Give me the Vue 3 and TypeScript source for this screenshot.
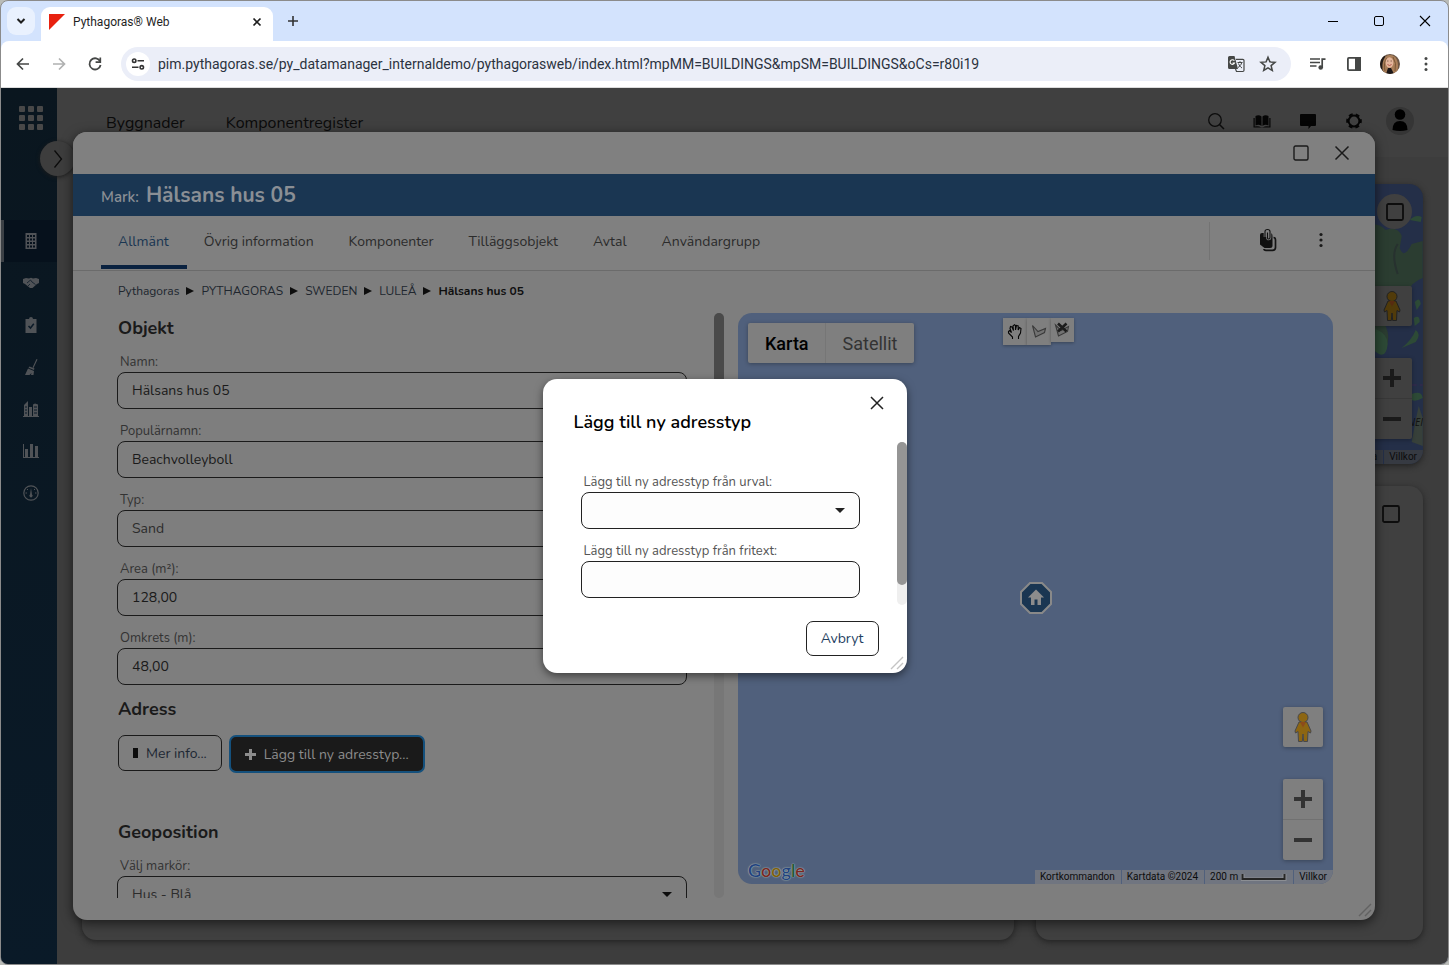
<script setup lang="ts">
import { ref } from 'vue'

interface Field {
  id: string
  label: string
  value: string
  kind: 'text' | 'select'
}

const address = ref('pim.pythagoras.se/py_datamanager_internaldemo/pythagorasweb/index.html?mpMM=BUILDINGS&mpSM=BUILDINGS&oCs=r80i19')
const tabs = ['Allmänt', 'Övrig information', 'Komponenter', 'Tilläggsobjekt', 'Avtal', 'Användargrupp']
const activeTab = ref('Allmänt')
const crumbs = ['Pythagoras', 'PYTHAGORAS', 'SWEDEN', 'LULEÅ']
const fields = ref<Field[]>([
  { id: 'namn', label: 'Namn:', value: 'Hälsans hus 05', kind: 'text' },
  { id: 'popnamn', label: 'Populärnamn:', value: 'Beachvolleyboll', kind: 'text' },
  { id: 'typ', label: 'Typ:', value: 'Sand', kind: 'select' },
  { id: 'area', label: 'Area (m²):', value: '128,00', kind: 'text' },
  { id: 'omkrets', label: 'Omkrets (m):', value: '48,00', kind: 'text' },
])
const sideItems = ['building', 'handshake', 'clipboard', 'broom', 'city', 'chart', 'gauge']
const googleLetters = [
  { c: 'G', k: 'b' }, { c: 'o', k: 'r' }, { c: 'o', k: 'y' },
  { c: 'g', k: 'b' }, { c: 'l', k: 'g' }, { c: 'e', k: 'r' },
]
const choice = ref('')
const freeText = ref('')
</script>

<template>
  <div class="window">
    <header class="tabstrip">
      <button class="tab-search" aria-label="Sök bland flikar">
        <svg width="12" height="12" viewBox="0 0 12 12"><path d="M2.5 4 6 7.5 9.500 4" fill="none" stroke="#1f1f1f" stroke-width="2" /></svg>
      </button>
      <div class="browser-tab">
        <svg width="16" height="16" viewBox="0 0 16 16"><path d="M0 0H16L0 16Z" fill="#e8210f" /></svg>
        <span class="tab-title">Pythagoras® Web</span>
        <button class="plain" aria-label="Stäng flik">
          <svg width="10" height="10" viewBox="0 0 10 10"><path d="M1.500 1.500 8.500 8.500M8.500 1.500 1.500 8.500" stroke="#1f1f1f" stroke-width="1.700" /></svg>
        </button>
      </div>
      <button class="plain new-tab" aria-label="Ny flik">
        <svg width="12" height="12" viewBox="0 0 12 12"><path d="M6 1V11M1 6H11" stroke="#333" stroke-width="1.600" /></svg>
      </button>
      <div class="win-controls">
        <button class="plain" aria-label="Minimera"><svg width="12" height="12" viewBox="0 0 12 12"><path d="M1 6.500H11" stroke="#000" /></svg></button>
        <button class="plain" aria-label="Maximera"><svg width="12" height="12" viewBox="0 0 12 12"><rect x="1.500" y="1.500" width="9" height="9" rx="1.500" fill="none" stroke="#000" /></svg></button>
        <button class="plain" aria-label="Stäng"><svg width="12" height="12" viewBox="0 0 12 12"><path d="M1 1 11 11M11 1 1 11" stroke="#000" stroke-width="1.100" /></svg></button>
      </div>
    </header>

    <div class="toolbar">
      <button class="plain nav" aria-label="Bakåt"><svg width="16" height="16" viewBox="0 0 16 16"><path d="M14 8H3M8 2.500 2.500 8 8 13.500" fill="none" stroke="#454746" stroke-width="1.700" /></svg></button>
      <button class="plain nav" aria-label="Framåt"><svg width="16" height="16" viewBox="0 0 16 16"><path d="M2 8H13M8 2.500 13.500 8 8 13.500" fill="none" stroke="#b0b1b1" stroke-width="1.700" /></svg></button>
      <button class="plain nav" aria-label="Läs in igen"><svg width="16" height="16" viewBox="0 0 16 16"><path d="M13.200 5.500A5.600 5.600 0 1 0 13.600 9" fill="none" stroke="#454746" stroke-width="1.800" /><path d="M13.300 1.500V6.200H8.600" fill="none" stroke="#454746" stroke-width="1.700" /></svg></button>
      <div class="omnibox">
        <button class="plain site-info" aria-label="Webbplatsinformation">
          <svg width="14" height="14" viewBox="0 0 14 14" fill="none" stroke="#333" stroke-width="1.600"><circle cx="3.200" cy="3.700" r="1.700" /><path d="M6.500 3.700H13M1 10.300H7.500" /><circle cx="10.800" cy="10.300" r="1.700" /></svg>
        </button>
        <input v-model="address" class="address" aria-label="Adress" type="text">
        <button class="plain" aria-label="Översätt">
          <svg width="18" height="18" viewBox="0 0 18 18"><path d="M2.500 1H7.500L11 14H2.500A1.500 1.500 0 0 1 1 12.500V2.500A1.500 1.500 0 0 1 2.500 1Z" fill="#454746" /><path d="M9 4.300H15.800A1.200 1.200 0 0 1 17 5.500V15.300A1.200 1.200 0 0 1 15.800 16.500H9.500L8.500 14" fill="none" stroke="#454746" stroke-width="1.200" /><path d="M7.300 5.700A2.300 2.300 0 1 0 7.500 8H5.600" fill="none" stroke="#fff" stroke-width="1.100" /><path d="M10.500 7.500H15.500M13 6.200V7.500M14.800 7.500C14.200 10 12.500 11.500 11 12.500M11.500 8.500C12.200 10.500 13.500 12 15 13" fill="none" stroke="#454746" stroke-width="1" /></svg>
        </button>
        <button class="plain" aria-label="Lägg till bokmärke">
          <svg width="18" height="18" viewBox="0 0 18 18"><path d="M9 2.200 10.900 6.900 16 7.300 12.100 10.600 13.300 15.500 9 12.800 4.700 15.500 5.900 10.600 2 7.300 7.100 6.900Z" fill="none" stroke="#454746" stroke-width="1.500" /></svg>
        </button>
      </div>
      <div class="tools">
        <button class="plain" aria-label="Media"><svg width="16" height="16" viewBox="0 0 16 16"><path d="M0 3H10M0 6.500H10M0 10H6.500" stroke="#454746" stroke-width="1.600" /><path d="M12.200 12V3.200H15.500" fill="none" stroke="#454746" stroke-width="1.700" /><circle cx="10.700" cy="11.500" r="2.300" fill="#454746" /></svg></button>
        <button class="plain" aria-label="Sidopanel"><svg width="16" height="16" viewBox="0 0 16 16"><rect x="1.900" y="1.900" width="12.200" height="12.200" rx="1" fill="none" stroke="#454746" stroke-width="1.800" /><path d="M9 1H15V15H9Z" fill="#454746" /></svg></button>
        <button class="plain" aria-label="Profil">
          <svg width="20" height="20" viewBox="0 0 20 20"><defs><clipPath id="face"><circle cx="10" cy="10" r="10" /></clipPath></defs><g clip-path="url(#face)"><path d="M0 0H20V20H0Z" fill="#6b5544" /><path d="M0 0H5V20H0Z" fill="#211b18" /><path d="M3 19C1 8 4 1 10 1S20 7 17 20Z" fill="#a97e58" /><path d="M5 17Q3 9 7 4M15 17Q17 9 13 3" fill="none" stroke="#7a5637" /><ellipse cx="9.500" cy="8.500" rx="3.900" ry="5.200" fill="#e3b59b" /><path d="M7.500 10.500Q9.500 12.500 11.500 10.500" fill="none" stroke="#b0554b" /><path d="M7 7H8.500M10.500 7H12" stroke="#8a6653" /><path d="M6 20 8 14H11L14 20Z" fill="#1b1718" /></g></svg>
        </button>
        <button class="plain" aria-label="Meny"><svg width="16" height="16" viewBox="0 0 16 16" fill="#454746"><circle cx="8" cy="2.500" r="1.500" /><circle cx="8" cy="8" r="1.500" /><circle cx="8" cy="13.500" r="1.500" /></svg></button>
      </div>
    </div>

    <div class="app">
      <nav class="sidebar" aria-label="Huvudmeny">
        <button class="plain apps" aria-label="Appar">
          <svg width="24" height="24" viewBox="0 0 24 24" fill="#484848"><g v-for="r in 3" :key="r"><rect v-for="c in 3" :key="c" :x="(c - 1) * 9" :y="(r - 1) * 9" width="6" height="6" rx="1" /></g></svg>
        </button>
        <button v-for="item in sideItems" :key="item" class="plain side-item" :class="{ active: item === 'building' }" :aria-label="item">
          <svg width="16" height="16" viewBox="0 0 16 16" fill="#505357" stroke="none">
            <template v-if="item === 'building'"><path d="M2.500 0H13.500V16H2.500Z" /><path d="M4 2H6V4H4ZM7 2H9V4H7ZM10 2H12V4H10ZM4 5.500H6V7.500H4ZM7 5.500H9V7.500H7ZM10 5.500H12V7.500H10ZM4 9H6V11H4ZM7 9H9V11H7ZM10 9H12V11H10ZM4 12.500H6V14.500H4ZM7 12.500H9V14.500H7ZM10 12.500H12V14.500H10Z" fill="#06111c" /></template>
            <template v-else-if="item === 'handshake'"><path d="M0 4 3 3 6 3.500 8 2.800 10 3.500 13 3 16 4V8L14 9 9.500 13H7L2 9 0 8Z" /><path d="M4 8 7.500 5 9 7 12.500 9.500M5 11 7 9" fill="none" stroke="#0b1a28" stroke-width="0.800" /></template>
            <template v-else-if="item === 'clipboard'"><path d="M3 2H6A2 2 0 0 1 10 2H13.500V16H2.500V2Z" /><path d="M5.500 9 7.500 11 10.800 6.800" fill="none" stroke="#0b1a28" stroke-width="1.500" /></template>
            <template v-else-if="item === 'broom'"><path d="M13.500 0 14.500 .500 10.500 9 9.500 8.500Z" /><path d="M6.500 7.500 11.500 9.500 11 11 5.500 8.800ZM5 9.500 11 12 10.500 16H8L8.500 14 6.500 16H2Z" /></template>
            <template v-else-if="item === 'city'"><path d="M1 4 5 0V15H6V6H9V15H10V3.500L12 2.500 15 3.500V15H16V16H0V15H1Z" /><path d="M2 6H4M2 9H4M2 12H4M11 6H14M11 9H14M11 12H14" stroke="#0b1a28" stroke-width="1" /></template>
            <template v-else-if="item === 'chart'"><path d="M0 1H1V14H16V15H0ZM2 6H5V14H2ZM7 1H10V14H7ZM12 3H15V14H12Z" /></template>
            <template v-else><circle cx="8" cy="8" r="7.200" fill="none" stroke="#505357" stroke-width="1.200" /><path d="M8 3 9 9.500A1.600 1.600 0 1 1 7 9.500Z" /><path d="M2.500 8H4M12 8H13.500M4 4 5 5M12 4 11 5" stroke="#505357" /></template>
          </svg>
        </button>
      </nav>

      <div class="main">
        <header class="app-header">
          <a href="#" class="app-link">Byggnader</a>
          <a href="#" class="app-link">Komponentregister</a>
          <div class="app-icons">
            <button class="plain" aria-label="Sök"><svg width="18" height="18" viewBox="0 0 18 18"><circle cx="8" cy="8" r="6.300" fill="none" stroke="#0c0c0c" stroke-width="1.300" /><path d="M12.500 12.500 17 17" stroke="#0c0c0c" stroke-width="1.500" /></svg></button>
            <button class="plain" aria-label="Handbok"><svg width="18" height="18" viewBox="0 0 18 18" fill="#050505"><path d="M2.500 4Q6 2.500 8.500 4.500V14Q6 12 2.500 13.500ZM9.500 4.500Q12 2.500 15.500 4V13.500Q12 12 9.500 14Z" /><path d="M.500 6H1.700V14.500Q5 13.500 8 15.200H10Q13 13.500 16.300 14.500V6H17.500V15.500H.500Z" /></svg></button>
            <button class="plain" aria-label="Meddelanden"><svg width="18" height="18" viewBox="0 0 18 18"><path d="M2 2H16A1 1 0 0 1 17 3V13A1 1 0 0 1 16 14H12L9.500 17V14H2A1 1 0 0 1 1 13V3A1 1 0 0 1 2 2Z" fill="#050505" /></svg></button>
            <button class="plain" aria-label="Inställningar"><svg width="18" height="18" viewBox="0 0 18 18"><circle cx="9" cy="9" r="5.400" fill="none" stroke="#050505" stroke-width="2" /><circle cx="9" cy="9" r="6.800" fill="none" stroke="#050505" stroke-width="2" stroke-dasharray="4 3.120" stroke-dashoffset="2" /></svg></button>
            <button class="plain" aria-label="Användare"><svg width="28" height="28" viewBox="0 0 28 28"><circle cx="14" cy="14" r="14" fill="#353535" /><circle cx="14" cy="7.500" r="5.300" /><path d="M6.500 23Q6.500 14 14 14T21.500 23Q14 25 6.500 23Z" /></svg></button>
          </div>
        </header>
        <div class="cards">
          <section class="card tall" />
          <section class="card map-card">
            <svg class="land" viewBox="0 0 387 280" preserveAspectRatio="xMaxYMid slice">
              <path d="M0 40H335Q345 40 350 46Q362 42 366 52L364 64Q368 76 376 60L387 57V94Q376 98 372 108L362 106Q354 112 358 124Q352 134 350 142Q356 156 348 166Q340 170 336 160L330 145H0Z" fill="#2b3d31" />
              <path d="M340 145Q352 150 352 160Q350 178 338 166ZM374 36Q380 30 386 33L385 38ZM379 118Q384 112 385 120L381 126ZM378 134Q384 130 384 138L379 142ZM380 146Q386 150 380 158L366 164Q376 156 380 146ZM376 210Q386 206 387 214Q380 218 376 216Z" fill="#2d4a36" />
              <path d="M380 236 383 222 387 234V262L376 258Z" fill="#37403a" />
              <path d="M362 60Q355 70 362 90" fill="none" stroke="#27312f" stroke-width="2" />
              <path d="M376 201H387" stroke="#2e2b4b" stroke-width="2" stroke-dasharray="5 3" />
            </svg>
            <span class="land-label">NEI</span>
            <button class="round" aria-label="Förstora karta"><svg width="18" height="18" viewBox="0 0 18 18"><rect x="1" y="1" width="16" height="16" rx="1.500" fill="none" stroke="#0d0d0d" stroke-width="1.800" /></svg></button>
            <div class="map-buttons">
              <button class="plain peg" aria-label="Street View"><svg width="20" height="32" viewBox="0 0 20 32"><path d="M6 11 2 20 2.500 22 5 20.500 5.500 30.500H9.300L10 23 10.700 30.500H14.500L15 20.500 17.500 22 18 20 14 11Z" fill="#513b0a" stroke="#222" /><circle cx="10" cy="6.500" r="5" fill="#513b0a" stroke="#222" /><path d="M7 11H13L10 16.500Z" fill="#572b11" /></svg></button>
              <div class="zoom"><button class="plain" aria-label="Zooma in"><svg width="18" height="18" viewBox="0 0 18 18"><path d="M9 0V18M0 9H18" stroke="#1a1a1a" stroke-width="4" /></svg></button><button class="plain" aria-label="Zooma ut"><svg width="18" height="18" viewBox="0 0 18 18"><path d="M0 9H18" stroke="#1a1a1a" stroke-width="4" /></svg></button></div>
            </div>
            <div class="map-terms"><span>Kartdata</span><a href="#">Villkor</a></div>
          </section>
          <section class="card">
            <button class="plain enlarge" aria-label="Förstora"><svg width="18" height="18" viewBox="0 0 18 18"><rect x="1" y="1" width="16" height="16" rx="1.500" fill="none" stroke="#0d0d0d" stroke-width="1.800" /></svg></button>
          </section>
        </div>
      </div>

      <button class="expand" aria-label="Visa meny"><svg width="10" height="20" viewBox="0 0 10 20"><path d="M1.500 1.500 8.500 10 1.500 18.500" fill="none" stroke="#0c0c0c" stroke-width="1.300" /></svg></button>

      <section class="dialog" aria-label="Hälsans hus 05">
        <div class="dialog-bar">
          <button class="plain" aria-label="Maximera dialog"><svg width="16" height="16" viewBox="0 0 16 16"><rect x="1" y="1" width="14" height="14" rx="1.500" fill="none" stroke="#1a1a1a" stroke-width="1.400" /></svg></button>
          <button class="plain" aria-label="Stäng dialog"><svg width="16" height="16" viewBox="0 0 16 16"><path d="M1.500 1.500 14.500 14.500M14.500 1.500 1.500 14.500" stroke="#1a1a1a" stroke-width="1.500" /></svg></button>
        </div>
        <div class="dialog-title"><span>Mark:</span><h1>Hälsans hus 05</h1></div>
        <div class="tabs">
          <button v-for="t in tabs" :key="t" class="tab" :class="{ selected: t === activeTab }" @click="activeTab = t">{{ t }}</button>
          <div class="tab-tools">
            <button class="plain" aria-label="Snabbval"><svg width="18" height="24" viewBox="0 0 18 24"><path d="M14.500 9.500Q16.500 9.500 16.500 12V19.500Q16.500 22.300 13.500 22.300H7Q5 22.300 5 21" fill="none" stroke="#141414" stroke-width="1.700" /><path d="M1 7Q1 5 3 5H11Q13.500 5 13.500 8V17.500Q13.500 20 11 20H5.500L1 16.500Z" fill="#111" /><path d="M6 9V3.500Q6 1.500 8.500 1.500T11 3.500V9.500Q11 11 9.700 11T8.500 9.500V4.500" fill="none" stroke="#7f7f7f" stroke-width="2.600" /><path d="M6 9V3.500Q6 1.500 8.500 1.500T11 3.500V9.500Q11 11 9.700 11T8.500 9.500V4.500" fill="none" stroke="#111" stroke-width="1.100" /></svg></button>
            <button class="plain" aria-label="Fler val"><svg width="16" height="16" viewBox="0 0 16 16" fill="#1a1a1a"><circle cx="8" cy="2.500" r="1.600" /><circle cx="8" cy="8" r="1.600" /><circle cx="8" cy="13.500" r="1.600" /></svg></button>
          </div>
        </div>
        <nav class="crumbs" aria-label="Sökväg">
          <template v-for="c in crumbs" :key="c"><a href="#">{{ c }}</a><svg width="8" height="8" viewBox="0 0 8 8"><path d="M0 0 8 4 0 8Z" fill="#0d0d0d" /></svg></template>
          <strong>Hälsans hus 05</strong>
        </nav>
        <div class="columns">
          <div class="scroller">
            <form class="form" @submit.prevent>
              <h2>Objekt</h2>
              <div v-for="f in fields" :key="f.id" class="field">
                <label :for="f.id">{{ f.label }}</label>
                <input v-if="f.kind === 'text'" :id="f.id" v-model="f.value" type="text">
                <select v-else :id="f.id" v-model="f.value"><option>{{ f.value }}</option></select>
              </div>
              <h2>Adress</h2>
              <div class="actions">
                <button class="btn" type="button"><svg width="5" height="10" viewBox="0 0 5 10"><path d="M0 0H5V10H0Z" fill="#0d0d0d" /></svg>Mer info...</button>
                <button class="btn focused" type="button"><svg width="11" height="11" viewBox="0 0 11 11"><path d="M5.500 0V11M0 5.500H11" stroke="#8c8c8c" stroke-width="3" /></svg>Lägg till ny adresstyp...</button>
              </div>
              <h2 class="geo">Geoposition</h2>
              <div class="field">
                <label for="markor">Välj markör:</label>
                <div class="select-wrap"><select id="markor"><option>Hus - Blå</option></select><svg width="10" height="5" viewBox="0 0 10 5"><path d="M0 0H10L5 5Z" fill="#0d0d0d" /></svg></div>
              </div>
            </form>
            <div class="track"><div class="thumb" /></div>
          </div>
          <div class="map">
            <div class="map-type"><button class="on">Karta</button><button>Satellit</button></div>
            <div class="draw">
              <button class="plain" aria-label="Panorera"><svg width="16" height="16" viewBox="0 0 16 16"><path d="M5.500 15V13L1.500 9V7.500L2.500 6.500 4.500 8.500 3 4.500 3.500 2.500 5 3 6.500 6.500 6 2 7.500 .700 8.500 1.500V6L9.500 1.500 11.200 2V6L12.500 3.500 14 4.500 13.500 9 11.500 12.500V15" fill="none" stroke="#050505" stroke-width="1.100" /></svg></button>
              <button class="plain" aria-label="Rita yta"><svg width="16" height="16" viewBox="0 0 16 16"><path d="M1.500 1.500 7 7.500 14.500 4.500 13.500 8.500 4.500 13Z" fill="#727272" stroke="#3a3a3a" stroke-width="1.100" /></svg></button>
              <button class="plain short" aria-label="Ta bort yta"><svg width="16" height="16" viewBox="0 0 16 16"><path d="M1.500 3 7 8.500 14.500 4.500 13.500 9.500 4.500 14Z" fill="#727272" stroke="#3a3a3a" stroke-width="1.100" /><path d="M4 1.500 12.500 9.500M12.500 1.500 4 9.500" stroke="#1c1c1c" stroke-width="2.600" /></svg></button>
            </div>
            <svg class="marker" width="32" height="32" viewBox="0 0 32 32"><path d="M10 1H22L31 10V22L22 31H10L1 22V10Z" fill="#1a3652" stroke="#898989" stroke-width="2" /><path d="M16 7.500 24 15.500H21V23H17.500V17.500H14.500V23H11V15.500H8Z" fill="#8c8c8c" /></svg>
            <div class="map-buttons">
              <button class="plain peg" aria-label="Street View"><svg width="20" height="32" viewBox="0 0 20 32"><path d="M6 11 2 20 2.500 22 5 20.500 5.500 30.500H9.300L10 23 10.700 30.500H14.500L15 20.500 17.500 22 18 20 14 11Z" fill="#8d6612" stroke="#48484a" /><circle cx="10" cy="6.500" r="5" fill="#8d6612" stroke="#48484a" /><path d="M7 11H13L10 16.500Z" fill="#8d4b1a" /></svg></button>
              <div class="zoom"><button class="plain" aria-label="Zooma in"><svg width="18" height="18" viewBox="0 0 18 18"><path d="M9 0V18M0 9H18" stroke="#333" stroke-width="4" /></svg></button><button class="plain" aria-label="Zooma ut"><svg width="18" height="18" viewBox="0 0 18 18"><path d="M0 9H18" stroke="#333" stroke-width="4" /></svg></button></div>
            </div>
            <div class="google" aria-label="Google"><span v-for="(l, i) in googleLetters" :key="i" :class="l.k">{{ l.c }}</span></div>
            <div class="map-terms">
              <button>Kortkommandon</button><span>Kartdata ©2024</span>
              <span class="scale">200 m<svg width="46" height="8" viewBox="0 0 46 8"><path d="M1.500 1V6.500H43.500V1" fill="none" stroke="#8b8e93" stroke-width="4" /><path d="M1.500 1V6H43.500V1" fill="none" stroke="#262626" stroke-width="2" /></svg></span>
              <a href="#">Villkor</a>
            </div>
          </div>
        </div>
        <svg class="grip" width="14" height="14" viewBox="0 0 14 14"><path d="M1 13 13 1M7 13 13 7" stroke="#626262" stroke-width="1.400" /></svg>
      </section>

      <div class="overlay">
        <section class="popup" role="dialog" aria-labelledby="popup-title">
          <div class="popup-head">
            <h2 id="popup-title">Lägg till ny adresstyp</h2>
            <button class="plain" aria-label="Stäng"><svg width="14" height="14" viewBox="0 0 14 14"><path d="M1 1 13 13M13 1 1 13" stroke="#222" stroke-width="1.500" /></svg></button>
          </div>
          <div class="popup-body">
            <div class="popup-form">
              <div class="field">
                <label for="urval">Lägg till ny adresstyp från urval:</label>
                <div class="select-wrap"><select id="urval" v-model="choice"><option value="" /></select><svg width="10" height="5" viewBox="0 0 10 5"><path d="M0 0H10L5 5Z" fill="#222" /></svg></div>
              </div>
              <div class="field">
                <label for="fritext">Lägg till ny adresstyp från fritext:</label>
                <input id="fritext" v-model="freeText" type="text">
              </div>
            </div>
            <div class="track"><div class="thumb" /></div>
          </div>
          <div class="popup-foot"><button class="btn">Avbryt</button></div>
          <svg class="grip" width="14" height="14" viewBox="0 0 14 14"><path d="M1 13 13 1M7 13 13 7" stroke="#c4c4c4" stroke-width="1.400" /></svg>
        </section>
      </div>
    </div>
  </div>
</template>

<style>
html, body { margin: 0; background: #b9bbb7; }
</style>

<style scoped>
* { box-sizing: border-box; }
.window { height: 100vh; min-height: 640px; display: flex; flex-direction: column; border: 1px solid #8b8b8b; border-radius: 8px; overflow: hidden; background: #d3e3fd; font-family: Nunito, Lato, "Noto Sans", sans-serif; }
button, input, select { font: inherit; color: inherit; margin: 0; }
a { color: inherit; text-decoration: none; }
h1, h2 { margin: 0; font-weight: 700; }
svg { display: block; flex: none; }
.plain { border: 0; background: none; padding: 0; display: flex; align-items: center; justify-content: center; }

.tabstrip { height: 40px; flex: none; display: flex; align-items: center; padding-left: 6px; }
.tab-search { width: 28px; height: 28px; border: 0; border-radius: 9px; background: #e9f1fe; padding: 0; display: flex; align-items: center; justify-content: center; }
.browser-tab { align-self: flex-end; width: 232px; height: 34px; margin-left: 6px; padding: 0 11px 4px 8px; display: flex; align-items: center; gap: 8px; background: #fff; border-radius: 9px 9px 0 0; }
.tab-title { flex: 1; font: 12px "Segoe UI", Roboto, sans-serif; color: #1f1f1f; }
.new-tab { width: 28px; height: 28px; margin-left: 6px; }
.win-controls { margin-left: auto; display: flex; }
.win-controls .plain { width: 46px; height: 38px; }

.toolbar { height: 47px; flex: none; display: flex; align-items: center; padding: 0 4px; background: #fff; border-bottom: 1px solid #dcdcdc; border-radius: 8px 8px 0 0; }
.nav { width: 36px; height: 34px; }
.omnibox { flex: 1; height: 34px; margin-left: 8px; padding: 0 14px 0 5px; border-radius: 17px; background: #ebeef8; display: flex; align-items: center; gap: 14px; }
.site-info { width: 24px; height: 24px; border-radius: 50%; background: #fff; margin-right: -6px; }
.address { flex: 1; min-width: 0; border: 0; padding: 0; background: none; font: 14px "Segoe UI", Roboto, sans-serif; color: #2b3340; }
.tools { display: flex; padding-left: 9px; }
.tools .plain { width: 36px; height: 34px; }

.app { flex: 1; min-height: 0; position: relative; display: flex; background: #3d3d3d; }
.sidebar { width: 56px; flex: none; display: flex; flex-direction: column; background: linear-gradient(#0a161f, #0a1a28); }
.apps { height: 60px; margin-bottom: 72px; padding-left: 3px; }
.side-item { height: 42px; padding-left: 3px; }
.side-item.active { background: #06111c; border-left: 3px solid #3c4146; padding-left: 0; }

.main { flex: 1; min-width: 0; display: flex; flex-direction: column; }
.app-header { height: 69px; flex: none; display: flex; align-items: flex-start; gap: 41px; padding: 18px 30px 0 49px; background: #404040; color: #0b0b0b; font-size: 16px; line-height: 34px; }
.app-icons { margin: 1px 0 0 auto; display: flex; gap: 10px; }
.app-icons .plain { width: 36px; height: 28px; }
.cards { flex: 1; display: grid; grid-template-columns: 933fr 387fr; grid-template-rows: 280px 1fr; gap: 22px; padding: 27px 25px 24px 25px; }
.card { position: relative; border-radius: 14px; background: #404040; box-shadow: 0 2px 6px #222; overflow: hidden; }
.tall { grid-row: 1 / 3; }
.map-card { background: #242f48; }
.land { width: 100%; height: 100%; }
.land-label { position: absolute; right: 0; top: 230px; font: italic 10px/16px "Open Sans", sans-serif; color: #111; }
.round { position: absolute; top: 10px; right: 11px; width: 35px; height: 35px; padding: 0; border: 0; border-radius: 50%; background: #404040; display: flex; align-items: center; justify-content: center; }
.enlarge { position: absolute; top: 19px; right: 23px; }
.map-buttons { position: absolute; right: 10px; bottom: 24px; display: flex; flex-direction: column; gap: 32px; }
.map-card .map-buttons { bottom: 25px; right: 11px; }
.peg, .zoom { width: 40px; background: #7f7f7f; border-radius: 2px; box-shadow: 0 1px 4px rgba(0, 0, 0, .3); }
.peg { height: 40px; }
.zoom .plain { width: 40px; height: 40px; }
.zoom .plain:first-child { border-bottom: 1px solid #717171; height: 41px; }
.map-card .peg, .map-card .zoom { background: #404040; }
.map-card .zoom .plain:first-child { border-color: #383838; }
.map-terms { position: absolute; right: 0; bottom: 0; display: flex; gap: 1px; font: 10px/14px Roboto, sans-serif; color: #0c0c0c; }
.map-terms > * { background: #707580; padding: 0 6px 0 5px; border: 0; font: inherit; height: 14px; }
.map-card .map-terms > * { background: #363a42; }

.expand { position: absolute; left: 39px; top: 53px; width: 35px; height: 35px; border: 0; border-radius: 50%; background: #3d3d3d; box-shadow: 0 1px 4px #1c1c1c; padding: 0; display: flex; align-items: center; justify-content: center; }

.dialog { position: absolute; inset: 44px 73px 44px 72px; display: flex; flex-direction: column; border-radius: 14px; background: #7e7e7e; box-shadow: 0 3px 12px rgba(0, 0, 0, .6); overflow: hidden; color: #1a1a1a; }
.dialog-bar { height: 42px; flex: none; display: flex; justify-content: flex-end; align-items: center; gap: 25px; padding-right: 25px; background: #808080; }
.dialog-title { height: 42px; flex: none; display: flex; align-items: baseline; gap: 7px; padding: 0 28px; background: #1a3652; color: #8a8f95; font-size: 15px; line-height: 42px; font-weight: 600; }
.dialog-title h1 { font-size: 21px; }
.tabs { height: 55px; flex: none; display: flex; padding: 0 28px; background: #808080; border-bottom: 1px solid #6b6b6b; }
.tab { height: 53px; border: 0; border-bottom: 4px solid transparent; background: none; padding: 2px 18px 0 17px; font-size: 14px; color: #2b2b2b; white-space: nowrap; }
.tab.selected { color: #1a3652; border-bottom-color: #0a2240; }
.tab-tools { margin: 6px 4px 10px auto; border-left: 1px solid #737373; display: flex; gap: 36px; padding: 0 14px 3px 49px; }
.crumbs { height: 42px; flex: none; display: flex; align-items: center; gap: 7px; padding: 0 45px 2px; font-size: 12px; color: #20262e; }
.crumbs strong { font-weight: 700; color: #0f0f0f; }
.columns { flex: 1; min-height: 0; display: grid; grid-template-columns: 607fr 595fr; gap: 14px; padding: 0 42px 22px 44px; }
.scroller { min-height: 0; display: flex; gap: 27px; }
.form { flex: 1; min-width: 0; overflow: hidden; }
.form h2 { height: 30px; margin: 9px 1px 9px; font-size: 18px; line-height: 30px; }
.form h2:first-child { margin-top: 0; }
.form .field + .field { margin-top: 12px; }
.field label { display: block; height: 20px; padding-left: 3px; font-size: 13px; line-height: 20px; color: #333; }
.field input, .field select { display: block; width: 100%; height: 37px; border: 1px solid #1a1a1a; border-radius: 8px; background: transparent; padding: 0 14px; font-size: 14px; appearance: none; outline: 0; }
.field select { color: #2c2c2c; opacity: 1; }
.select-wrap { position: relative; }
.select-wrap svg { position: absolute; right: 15px; top: 16px; pointer-events: none; }
.actions { display: flex; align-items: flex-start; gap: 7px; padding: 2px 1px 0; }
.btn { display: flex; align-items: center; justify-content: center; gap: 8px; height: 36px; border: 1px solid #1a1a1a; border-radius: 7px; background: transparent; padding: 0 14px; font-size: 14px; color: #1d2733; white-space: nowrap; }
.btn.focused { height: 38px; border: 2px solid #14507c; background: #1a1a1a; color: #8c8c8c; }
.form h2.geo { margin-top: 44px; }
.track { width: 10px; flex: none; border-radius: 5px; background: #777; }
.thumb { height: 57%; border-radius: 5px; background: #4a4a4a; }

.map { position: relative; margin-bottom: 14px; border-radius: 14px; background: #50607c; overflow: hidden; }
.map-type { position: absolute; left: 10px; top: 10px; display: flex; border-radius: 2px; background: #7f7f7f; box-shadow: 0 1px 4px rgba(0, 0, 0, .3); }
.map-type button { height: 40px; padding: 0 16px 0 17px; border: 0; background: none; font: 18px Roboto, sans-serif; color: #333; }
.map-type .on { font-weight: 500; color: #000; border-right: 1px solid #767676; }
.draw { position: absolute; left: 50%; top: 5px; margin-left: -33px; display: flex; align-items: flex-start; }
.draw .plain { width: 24px; height: 27px; background: #7f7f7f; box-shadow: 0 1px 3px rgba(0, 0, 0, .3); }
.draw .short { width: 23px; height: 24px; }
.marker { position: absolute; left: calc(50% - 16px); top: calc(50% - 17px); }
.google { position: absolute; left: 10px; bottom: 2px; font: 500 18px/24px "Product Sans", Lato, sans-serif; text-shadow: 0 0 1px #9aa, 0 0 1px #9aa, 0 0 2px #9aa; }
.google .b { color: #21427f; }
.google .r { color: #7a2620; }
.google .y { color: #7f5f08; }
.google .g { color: #1c5a30; }
.scale { display: flex; align-items: center; gap: 3px; }
.grip { position: absolute; right: 3px; bottom: 3px; }

.overlay { position: absolute; inset: 0; display: flex; align-items: center; justify-content: center; }
.popup { position: relative; width: 364px; border-radius: 14px; background: #fff; box-shadow: 0 3px 8px rgba(0, 0, 0, .5); overflow: hidden; color: #000; }
.popup-head { height: 63px; display: flex; align-items: flex-start; justify-content: space-between; padding: 12px 18px 0 31px; }
.popup-head h2 { margin-top: 19px; font-size: 18px; line-height: 24px; font-weight: 600; }
.popup-head .plain { width: 24px; height: 24px; }
.popup-body { height: 163px; display: flex; justify-content: space-between; }
.popup-form { width: 317px; padding: 30px 0 0 38px; display: flex; flex-direction: column; gap: 12px; }
.popup .field label { color: #555; }
.popup .field input, .popup .field select { background: #fdfdfd; border-color: #222; }
.popup .track { background: #efefef; }
.popup .thumb { height: 143px; background: #959595; }
.popup-foot { display: flex; justify-content: flex-end; padding: 16px 28px 17px; }
.popup-foot .btn { height: 35px; border-color: #222; color: #23415f; }
</style>
